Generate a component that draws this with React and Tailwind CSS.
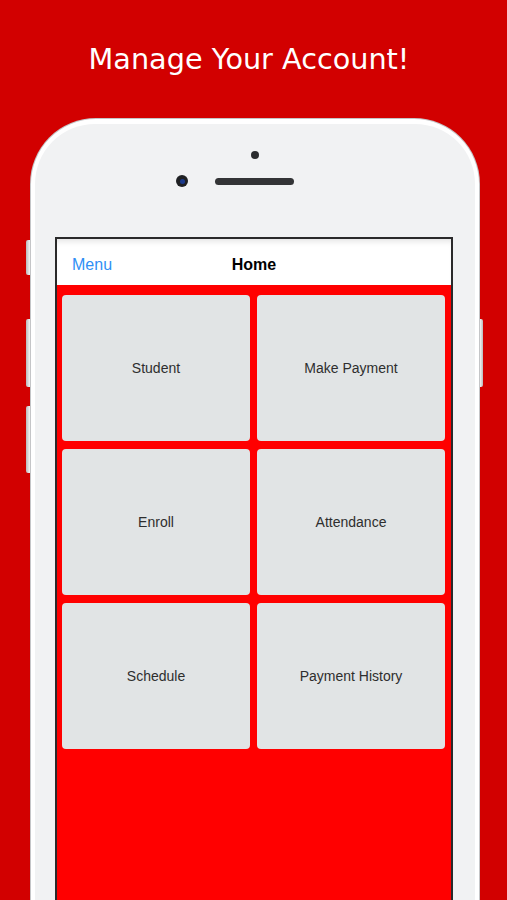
import React from 'react';

const tiles = ['Student', 'Make Payment', 'Enroll', 'Attendance', 'Schedule', 'Payment History'];

function SideButton({ className }) {
  return <div className={`absolute w-[4px] rounded-l-[2px] bg-gradient-to-r from-[#b9babc] to-[#f4f4f5] ${className}`} />;
}

export default function App() {
  return (
    <div className="h-[900px] w-full overflow-hidden bg-[#d20000]">
      <h1
        className="pr-[9px] pt-[42px] text-center text-[28.7px] leading-[34px] text-white"
        style={{ fontFamily: '"DejaVu Sans", Verdana, sans-serif' }}
      >
        Manage Your Account!
      </h1>

      <div className="relative ml-[30px] mt-[42px] w-[450px]">
        <SideButton className="-left-[4px] top-[122px] h-[35px]" />
        <SideButton className="-left-[4px] top-[201px] h-[68px]" />
        <SideButton className="-left-[4px] top-[288px] h-[67px]" />
        <div className="absolute -right-[3px] top-[201px] h-[68px] w-[3px] rounded-r-[2px] bg-gradient-to-r from-[#f4f4f5] to-[#b9babc]" />

        <div className="h-[800px] rounded-t-[66px] bg-[#c4c5c7] p-[1px]">
          <div className="h-full rounded-t-[65px] bg-white px-[4px] pt-[5px]">
            <div className="h-full rounded-t-[60px] bg-[#f1f2f3] pt-[27px]">
              <div className="ml-[216px] h-[8px] w-[8px] rounded-full bg-[#2b2c2e]" />
              <div className="mt-[16px] flex items-center pl-[141px]">
                <div className="flex h-[12px] w-[12px] items-center justify-center rounded-full bg-[#1f2023]">
                  <div className="h-[5px] w-[5px] rounded-full bg-[#1b3a8c]" />
                </div>
                <div className="ml-[27px] h-[7px] w-[79px] rounded-full bg-[#333436]" />
              </div>

              <div
                className="ml-[20px] mt-[50px] h-[700px] w-[398px] border-2 border-[#2a2a2a] bg-[#ff0000]"
                style={{ fontFamily: '"Liberation Sans", Arial, sans-serif' }}
              >
                <div className="relative flex h-[46px] items-center justify-center bg-white pt-[6px] shadow-[inset_0_6px_6px_-4px_rgba(0,0,0,0.12)]">
                  <span className="absolute left-[15px] top-[14px] text-[16px] text-[#2f8ff5]">Menu</span>
                  <span className="text-[16px] font-bold text-black">Home</span>
                </div>
                <div className="grid grid-cols-2 gap-x-[7px] gap-y-[8px] pl-[5px] pr-[6px] pt-[10px]">
                  {tiles.map((t) => (
                    <div
                      key={t}
                      className="flex h-[146px] items-center justify-center rounded-[4px] bg-[#e1e4e5] text-[14px] text-[#2e2e2e]"
                    >
                      {t}
                    </div>
                  ))}
                </div>
              </div>
            </div>
          </div>
        </div>
      </div>
    </div>
  );
}
